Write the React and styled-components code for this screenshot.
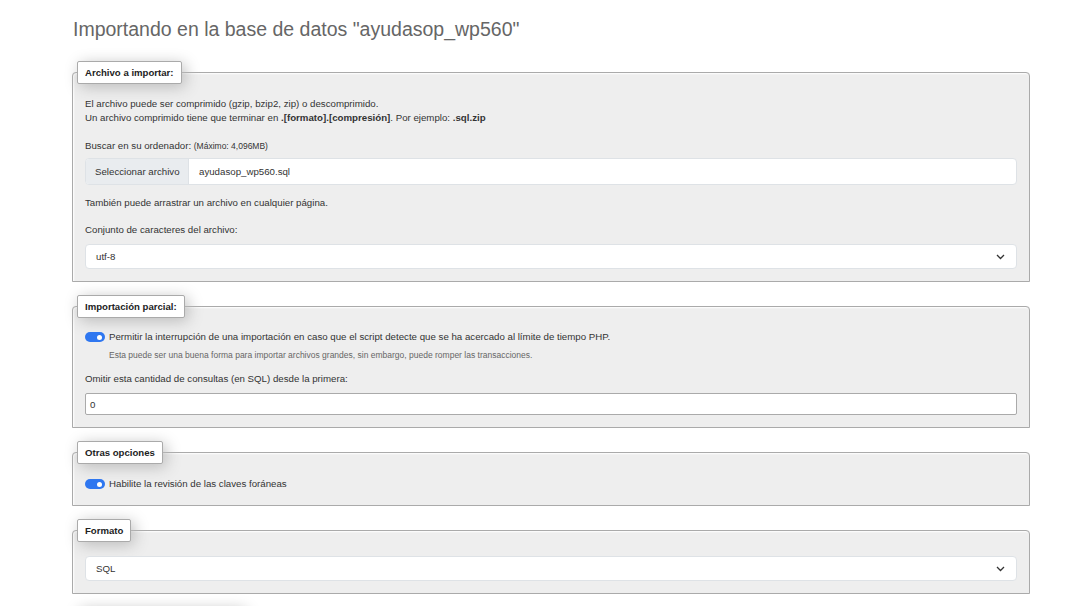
import React from "react";
import styled, { createGlobalStyle } from "styled-components";

const GlobalStyle = createGlobalStyle`
  html, body {
    margin: 0;
    padding: 0;
    background: #fff;
  }
  body {
    font-family: "Liberation Sans", Arial, sans-serif;
    font-size: 9.7px;
    color: #333;
  }
`;

/* =========================
   Styled Components
========================= */

const Page = styled.div`
  padding: 16px 37px 0 72px;
  height: 606px;
  overflow: hidden;
  box-sizing: border-box;
`;

const Title = styled.h2`
  margin: 0 0 0 1px;
  font-size: 19.5px;
  font-weight: normal;
  color: #666;
  line-height: 26px;
`;

const Fieldset = styled.fieldset`
  margin: ${(p) => (p.$first ? "19px" : "13px")} 0 0;
  padding: 8px 12px ${(p) => p.$pb || "12px"};
  border: 1px solid #aaa;
  border-radius: 4px 4px 0 0;
  background: #eee;
  box-shadow: 1px 1px 2px #fff inset;
  min-width: 0;
`;

const Legend = styled.legend`
  margin-left: -8px;
  padding: 5px 7px 5px;
  border: 1px solid #aaa;
  border-radius: 2px;
  background: #fff;
  box-shadow: 3px 3px 15px #bbb;
  font-weight: bold;
  font-size: 9.6px;
  line-height: 11px;
  color: #222;
`;

const Text = styled.p`
  margin: ${(p) => p.$mt || "0"} 0 0;
  line-height: 14px;
`;

const Small = styled.span`
  font-size: 8.5px;
`;

const FileGroup = styled.div`
  display: flex;
  margin-top: 5px;
  height: 27px;
  border: 1px solid #dee2e6;
  border-radius: 4px;
  background: #fff;
  overflow: hidden;
  box-sizing: border-box;
  white-space: nowrap;
`;

const FileButton = styled.div`
  display: flex;
  align-items: center;
  padding: 0 9px;
  width: 103px;
  box-sizing: border-box;
  background: #e9ecef;
  border-right: 1px solid #dee2e6;
  color: #333;
`;

const FileName = styled.div`
  display: flex;
  align-items: center;
  padding: 0 10px;
`;

const Select = styled.div`
  display: flex;
  align-items: center;
  justify-content: space-between;
  margin-top: ${(p) => p.$mt || "7px"};
  height: 25px;
  padding: 0 11px 0 10px;
  border: 1px solid #dee2e6;
  border-radius: 4px;
  background: #fff;
  box-sizing: border-box;
`;

const ToggleRow = styled.div`
  display: flex;
  align-items: center;
  gap: 4px;
  margin-top: ${(p) => p.$mt || "0"};
  line-height: 14px;
`;

const Toggle = styled.span`
  position: relative;
  display: inline-block;
  width: 20px;
  height: 10px;
  border-radius: 5px;
  background: #2f77f0;
  flex-shrink: 0;

  &::after {
    content: "";
    position: absolute;
    top: 2.5px;
    right: 3px;
    width: 5px;
    height: 5px;
    border-radius: 50%;
    background: #fff;
  }
`;

const Hint = styled.p`
  margin: 5px 0 0 24px;
  font-size: 8.5px;
  line-height: 12px;
  color: #666;
`;

const NumberInput = styled.div`
  display: flex;
  align-items: center;
  margin-top: 7px;
  height: 22px;
  padding: 0 4px;
  border: 1px solid #aaa;
  border-radius: 2px;
  background: #fff;
  box-sizing: border-box;
`;

const Chevron = () => (
  <svg width="9" height="6" viewBox="0 0 9 6" fill="none">
    <path d="M1 1l3.5 3.5L8 1" stroke="#333" strokeWidth="1.3" />
  </svg>
);

/* =========================
   Component
========================= */

const App = () => (
  <>
    <GlobalStyle />
    <Page>
      <Title>Importando en la base de datos "ayudasop_wp560"</Title>

      <Fieldset $first>
        <Legend>Archivo a importar:</Legend>
        <Text $mt="5px">
          El archivo puede ser comprimido (gzip, bzip2, zip) o descomprimido.
          <br />
          Un archivo comprimido tiene que terminar en{" "}
          <b>.[formato].[compresión]</b>. Por ejemplo: <b>.sql.zip</b>
        </Text>
        <Text $mt="14px">
          Buscar en su ordenador: <Small>(Máximo: 4,096MB)</Small>
        </Text>
        <FileGroup>
          <FileButton>Seleccionar archivo</FileButton>
          <FileName>ayudasop_wp560.sql</FileName>
        </FileGroup>
        <Text $mt="11px">También puede arrastrar un archivo en cualquier página.</Text>
        <Text $mt="13px">Conjunto de caracteres del archivo:</Text>
        <Select>
          <span>utf-8</span>
          <Chevron />
        </Select>
      </Fieldset>

      <Fieldset $pb="12px">
        <Legend>Importación parcial:</Legend>
        <ToggleRow $mt="4px">
          <Toggle />
          Permitir la interrupción de una importación en caso que el script
          detecte que se ha acercado al límite de tiempo PHP.
        </ToggleRow>
        <Hint>
          Esta puede ser una buena forma para importar archivos grandes, sin
          embargo, puede romper las transacciones.
        </Hint>
        <Text $mt="11px">
          Omitir esta cantidad de consultas (en SQL) desde la primera:
        </Text>
        <NumberInput>0</NumberInput>
      </Fieldset>

      <Fieldset $pb="14px">
        <Legend>Otras opciones</Legend>
        <ToggleRow $mt="5px">
          <Toggle />
          Habilite la revisión de las claves foráneas
        </ToggleRow>
      </Fieldset>

      <Fieldset>
        <Legend>Formato</Legend>
        <Select $mt="6px">
          <span>SQL</span>
          <Chevron />
        </Select>
      </Fieldset>

      <Fieldset>
        <Legend>Opciones específicas al formato:</Legend>
      </Fieldset>
    </Page>
  </>
);

export default App;
